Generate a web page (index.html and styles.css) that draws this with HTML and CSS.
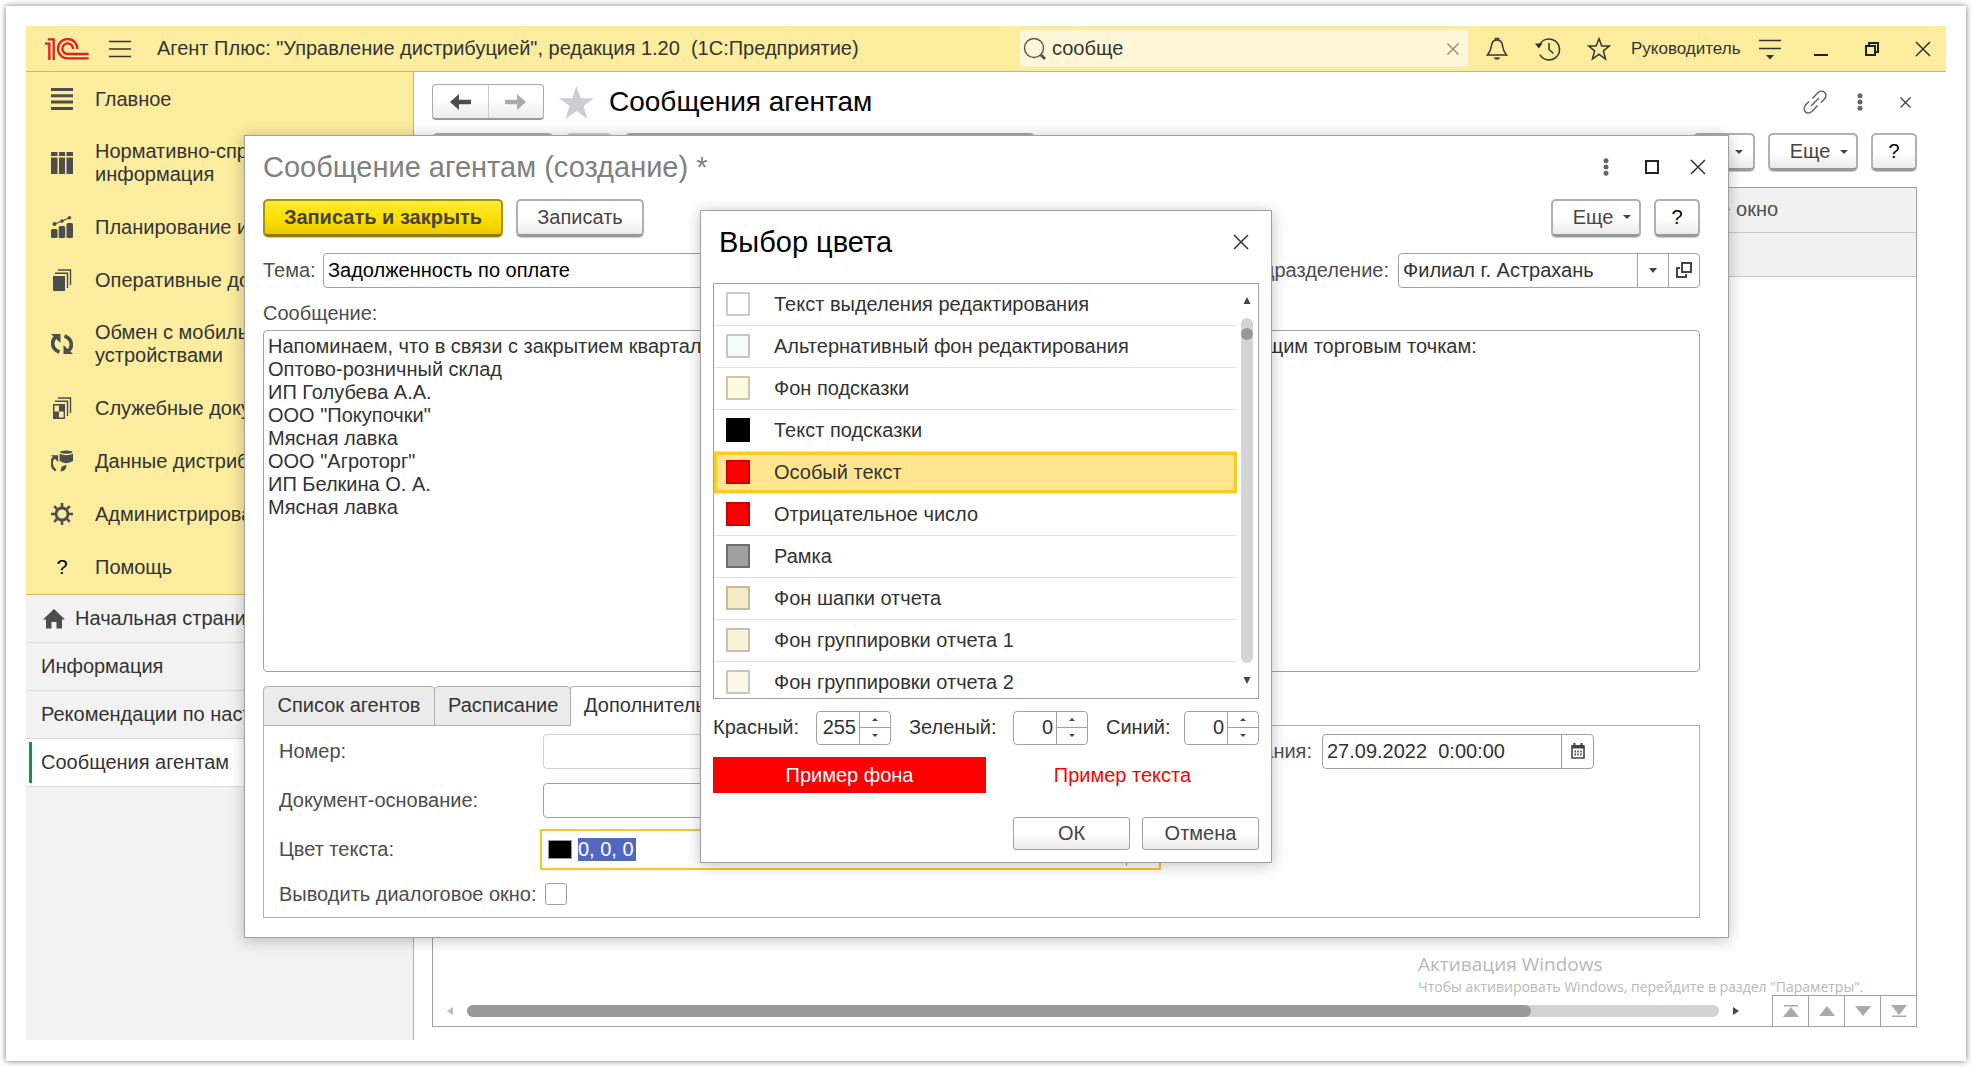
FILE: index.html
```html
<!DOCTYPE html>
<html lang="ru">
<head>
<meta charset="utf-8">
<title>Агент Плюс: Управление дистрибуцией</title>
<link rel="stylesheet" href="styles.css">
</head>
<body>
<div class="sheet">
<div class="app">

<header class="titlebar">
  <svg class="logo" width="44" height="22" viewBox="0 0 132 66" fill="none" stroke="#e31e24" stroke-width="7"><path d="M0 17H13V66M9 4H26V66M97 33A29 29 0 1 0 68 61H131M84 33A16 16 0 1 0 68 48H131"/></svg>
  <button class="icon-btn burger" aria-label="Меню"><svg width="22" height="18" viewBox="0 0 22 18" stroke="#333" stroke-width="1.4"><path d="M0 1.5H22M0 9H22M0 16.5H22"/></svg></button>
  <span class="app-title">Агент Плюс: "Управление дистрибуцией", редакция 1.20&nbsp; (1С:Предприятие)</span>
  <div class="search">
    <svg width="24" height="24" viewBox="0 0 24 24" fill="none" stroke="#555"><circle cx="11" cy="11" r="9.5" stroke-width="1.4"/><path d="M17.500 17.500L22 22" stroke-width="3"/></svg>
    <input type="text" value="сообще" aria-label="Поиск">
    <button class="icon-btn small" aria-label="Очистить"><svg width="12" height="12" viewBox="0 0 12 12" stroke="#8f8b77" stroke-width="1.4"><path d="M.5 .5L11.500 11.500M11.500 .5L.5 11.500"/></svg></button>
  </div>
  <button class="icon-btn" aria-label="Уведомления"><svg width="22" height="24" viewBox="0 0 22 24" fill="none" stroke="#333" stroke-width="1.500"><path d="M1.500 18C4.500 14.500 5 13 5.500 8.500C6 4.500 8 3 11 3S16 4.500 16.500 8.500C17 13 17.500 14.500 20.500 18Z"/><path d="M9.500 3V1.500H12.500V3"/><path d="M7.500 20.500H14.500L12.500 22.500H9.500Z" fill="#333" stroke="none"/></svg></button>
  <button class="icon-btn" aria-label="История"><svg width="26" height="24" viewBox="0 0 26 24" fill="none" stroke="#333" stroke-width="1.500"><path d="M4.300 8.500A10.500 10.500 0 1 1 4.800 17.500"/><path d="M14 6V12.500L18.500 16.500"/><path d="M0 6.500H7.500L3.800 11.500Z" fill="#333" stroke="none"/></svg></button>
  <button class="icon-btn" aria-label="Избранное"><svg width="24" height="24" viewBox="0 0 24 24" fill="none" stroke="#333" stroke-width="1.500"><path d="M12 1.800L14.800 9H22.300L16.400 13.800L18.500 22L12 17.300L5.500 22L7.600 13.800L1.700 9H9.200Z"/></svg></button>
  <button class="user">Руководитель</button>
  <button class="icon-btn" aria-label="Настройки"><svg width="22" height="22" viewBox="0 0 22 22" stroke="#333" stroke-width="1.600"><path d="M0 2.500H22M0 10.500H22"/><path d="M7 17H15L11 21.500Z" fill="#333" stroke="none"/></svg></button>
  <button class="icon-btn" aria-label="Свернуть"><svg width="14" height="14" viewBox="0 0 14 14"><path d="M0 12H14V14H0Z" fill="#222"/></svg></button>
  <button class="icon-btn" aria-label="Восстановить"><svg width="14" height="14" viewBox="0 0 14 14" fill="none" stroke="#222" stroke-width="2"><path d="M1 4H10V13H1ZM4 4V1H13V10H10"/></svg></button>
  <button class="icon-btn" aria-label="Закрыть"><svg width="16" height="16" viewBox="0 0 16 16" stroke="#333" stroke-width="1.500"><path d="M1 1L15 15M15 1L1 15"/></svg></button>
</header>

<div class="workspace">
  <aside class="side">
    <nav class="sections">
      <a href="#"><svg width="22" height="22" viewBox="0 0 22 22" fill="#4d4d4d"><path d="M0 0H22V3H0ZM0 6.300H22V9.300H0ZM0 12.600H22V15.600H0ZM0 19H22V22H0Z"/></svg><span>Главное</span></a>
      <a href="#"><svg width="22" height="22" viewBox="0 0 22 22" fill="#4d4d4d"><path d="M0 0H6.500V4H0ZM8 0H14V4H8ZM15.500 0H22V4H15.500ZM0 5.500H6.500V22H0ZM8 5.500H14V22H8ZM15.500 5.500H22V22H15.500Z"/></svg><span>Нормативно-справочная<br>информация</span></a>
      <a href="#"><svg width="22" height="22" viewBox="0 0 22 22" fill="#4d4d4d"><rect y="13" width="6.500" height="9" rx="1.500"/><rect x="7.700" y="10" width="6.500" height="12" rx="1.500"/><rect x="15.500" y="7" width="6.500" height="15" rx="1.500"/><circle cx="3.500" cy="8" r="2"/><circle cx="11" cy="5" r="1.800"/><circle cx="18.500" cy="1.800" r="1.800"/><path d="M3.500 8L11 5L18.500 1.800" stroke="#4d4d4d" stroke-width="1.200" fill="none"/></svg><span>Планирование и анализ</span></a>
      <a href="#"><svg width="22" height="22" viewBox="0 0 22 22" fill="none" stroke="#4d4d4d" stroke-width="1.400"><path d="M2 7H14V22H2Z" fill="#4d4d4d" stroke="none"/><path d="M4 4.300H16.500V19M7 1H19.500V16"/></svg><span>Оперативные документы</span></a>
      <a href="#"><svg width="22" height="22" viewBox="0 0 22 22" fill="none" stroke="#4d4d4d" stroke-width="3.600"><path d="M8.500 19C0 16 0 7 5.500 3.500M13.500 3C22 6 22 15 16.500 18.500"/><path d="M0 1H9.500V10ZM22 21H12.500V12Z" fill="#4d4d4d" stroke="none"/></svg><span>Обмен с мобильными<br>устройствами</span></a>
      <a href="#"><svg width="22" height="22" viewBox="0 0 22 22" fill="none" stroke="#4d4d4d" stroke-width="1.400"><path d="M2.700 7.700H13.300V21.300H2.700Z"/><path d="M8 7.500H13V14.500H8ZM3 14.500H8V21.500H3Z" fill="#4d4d4d" stroke="none"/><path d="M4 4.300H16.500V19M7 1H19.500V16"/></svg><span>Служебные документы</span></a>
      <a href="#"><svg width="22" height="22" viewBox="1 0 23 22" fill="none" stroke="#4d4d4d" stroke-width="2.600"><path d="M6 21C0 17 1 9 5 6.500"/><path d="M1 5H8.500V12Z" fill="#4d4d4d" stroke="none"/><path d="M11 22L12 17L17 15C17.500 19 15 22 11 22Z" fill="#4d4d4d" stroke="none"/><ellipse cx="17" cy="1.700" rx="6.500" ry="1.700" fill="#4d4d4d" stroke="none"/><path d="M10 3.500Q17 6.500 24 3.500V11Q17 15.500 10 11Z" fill="#4d4d4d" stroke="none"/></svg><span>Данные дистрибуции</span></a>
      <a href="#"><svg width="22" height="22" viewBox="0 0 22 22" fill="none" stroke="#4d4d4d"><circle cx="11" cy="11" r="6" stroke-width="2.800"/><path d="M11 0V4M11 18V22M0 11H4M18 11H22M3.200 3.200L6 6M16 16L18.800 18.800M3.200 18.800L6 16M16 6L18.800 3.200" stroke-width="2.600"/></svg><span>Администрирование</span></a>
      <a href="#"><b class="qmark">?</b><span>Помощь</span></a>
    </nav>
    <nav class="windows">
      <a href="#" class="home"><svg width="22" height="20" viewBox="0 0 22 20" fill="#4d4d4d"><path d="M11 0L22 10.500H19V19.500H13.500V13H8.500V19.500H3V10.500H0Z"/></svg>Начальная страница</a>
      <a href="#">Информация</a>
      <a href="#">Рекомендации по настройке</a>
      <a href="#" class="current">Сообщения агентам</a>
    </nav>
  </aside>

  <main class="page">
    <div class="page-head">
      <div class="nav-pair">
        <button aria-label="Назад"><svg width="21" height="16" viewBox="0 0 21 16"><path d="M0 8L9 0V5.800H21V10.200H9V16Z" fill="#4d4d4d"/></svg></button>
        <button aria-label="Вперед"><svg width="21" height="16" viewBox="0 0 21 16"><path d="M21 8L12 0V5.800H0V10.200H12V16Z" fill="#aaa"/></svg></button>
      </div>
      <svg class="star" width="35" height="33" viewBox="0 0 35 33" fill="#ccced0"><path d="M17.500 0L21.800 12.200H35L24.500 20L28.500 33L17.500 25L6.500 33L10.500 20L0 12.200H13.200Z"/></svg>
      <h1>Сообщения агентам</h1>
      <div class="head-tools">
        <button class="icon-btn" aria-label="Ссылка"><svg width="24" height="24" viewBox="0 0 24 24" fill="none" stroke="#666" stroke-width="1.600"><path d="M8 16L16 8"/><path d="M9.500 8.500L14.500 3C17 .5 20 .8 21.700 2.500S23.500 7 21 9.500L18 12.500M6 11.500L3 14.500C.5 17 .8 20 2.300 21.700S7 23.500 9.500 21L14.500 15.500"/></svg></button>
        <button class="icon-btn" aria-label="Еще"><svg width="6" height="18" viewBox="0 0 6 18" fill="#666"><circle cx="3" cy="2.700" r="2.500"/><circle cx="3" cy="9" r="2.500"/><circle cx="3" cy="15.300" r="2.500"/></svg></button>
        <button class="icon-btn" aria-label="Закрыть"><svg width="11" height="11" viewBox="0 0 11 11" stroke="#444" stroke-width="1.400"><path d="M.5 .5L10.500 10.500M10.500 .5L.5 10.500"/></svg></button>
      </div>
    </div>
    <div class="toolbar">
      <button class="btn create" aria-label="Создать"></button>
      <button class="btn copy" disabled aria-label="Скопировать"></button>
      <input class="list-search" type="text" aria-label="Поиск по списку">
      <button class="btn drop" aria-label="Печать"><i class="caret"></i></button>
      <button class="btn more">Еще<i class="caret"></i></button>
      <button class="btn help">?</button>
    </div>
    <div class="grid-box">
      <table>
        <thead><tr><th></th><th class="last">Диалоговое окно</th></tr></thead>
        <tbody><tr><td></td><td></td></tr></tbody>
      </table>
      <div class="watermark"><p class="wm-title">Активация Windows</p><p>Чтобы активировать Windows, перейдите в раздел "Параметры".</p></div>
      <div class="grid-foot">
        <div class="hscroll">
          <svg width="6" height="8" viewBox="0 0 6 8"><path d="M6 0V8L0 4Z" fill="#bbb"/></svg>
          <div class="track"><div class="thumb"></div></div>
          <svg width="6" height="8" viewBox="0 0 6 8"><path d="M0 0V8L6 4Z" fill="#444"/></svg>
        </div>
        <div class="pager">
          <button aria-label="В начало"><svg width="16" height="12" viewBox="0 0 16 12" fill="#aaa"><path d="M1 0H15V1.500H1ZM8 2L16 12H0Z"/></svg></button>
          <button aria-label="Вверх"><svg width="16" height="10" viewBox="0 0 16 10" fill="#aaa"><path d="M8 0L16 10H0Z"/></svg></button>
          <button aria-label="Вниз"><svg width="16" height="10" viewBox="0 0 16 10" fill="#aaa"><path d="M8 10L16 0H0Z"/></svg></button>
          <button aria-label="В конец"><svg width="16" height="12" viewBox="0 0 16 12" fill="#aaa"><path d="M1 12H15V10.500H1ZM8 10L16 0H0Z"/></svg></button>
        </div>
      </div>
    </div>
  </main>
</div>

<div class="layer">
<section class="dialog message" role="dialog" aria-labelledby="msg-title">
  <div class="dialog-head">
    <h2 id="msg-title">Сообщение агентам (создание) *</h2>
    <button class="icon-btn" aria-label="Меню"><svg width="6" height="18" viewBox="0 0 6 18" fill="#666"><circle cx="3" cy="2.700" r="2.500"/><circle cx="3" cy="9" r="2.500"/><circle cx="3" cy="15.300" r="2.500"/></svg></button>
    <button class="icon-btn" aria-label="Развернуть"><svg width="14" height="14" viewBox="0 0 14 14" fill="none" stroke="#222" stroke-width="2"><path d="M1 1H13V13H1Z"/></svg></button>
    <button class="icon-btn" aria-label="Закрыть"><svg width="16" height="16" viewBox="0 0 16 16" stroke="#333" stroke-width="1.500"><path d="M1 1L15 15M15 1L1 15"/></svg></button>
  </div>
  <div class="toolbar">
    <button class="btn primary">Записать и закрыть</button>
    <button class="btn save">Записать</button>
    <button class="btn more push">Еще<i class="caret"></i></button>
    <button class="btn help">?</button>
  </div>
  <div class="topic-row">
    <label for="topic" class="topic-label">Тема:</label>
    <input id="topic" class="field topic" type="text" value="Задолженность по оплате">
    <label for="dept">Подразделение:</label>
    <div class="field combo dept">
      <select id="dept"><option>Филиал г. Астрахань</option></select>
      <button aria-label="Выбрать"><i class="caret tall"></i></button>
      <button aria-label="Открыть"><svg width="16" height="16" viewBox="0 0 16 16" fill="none" stroke="#444" stroke-width="2"><path d="M6 1H15V10H6Z"/><path d="M4 6H1V15H10V12"/></svg></button>
    </div>
  </div>
  <label class="msg-label" for="msg">Сообщение:</label>
  <textarea id="msg" class="field" wrap="off">Напоминаем, что в связи с закрытием квартального плана необходимо погасить задолженность по следующим торговым точкам:
Оптово-розничный склад
ИП Голубева А.А.
ООО "Покупочки"
Мясная лавка
ООО "Агроторг"
ИП Белкина О. А.
Мясная лавка</textarea>
  <div class="tabs" role="tablist">
    <button role="tab" class="tab-wide">Список агентов</button>
    <button role="tab" class="tab-mid">Расписание</button>
    <button role="tab" class="active" aria-selected="true">Дополнительно</button>
  </div>
  <div class="panel">
    <div class="form-row">
      <label for="num">Номер:</label>
      <input id="num" class="field num" type="text" disabled>
      <label for="until" class="until">Дата окончания:</label>
      <div class="field combo date">
        <input id="until" type="text" value="27.09.2022  0:00:00">
        <button aria-label="Календарь"><svg width="14" height="16" viewBox="0 0 14 16" fill="none" stroke="#444"><path d="M1 3H13V15H1Z" stroke-width="1.600"/><path d="M1 2H13V5.500H1Z" fill="#444" stroke="none"/><path d="M3.500 0V3M10.500 0V3" stroke-width="2"/><path d="M3.500 8.500H5M6.300 8.500H7.800M9.200 8.500H10.700M3.500 11.500H5M6.300 11.500H7.800M9.200 11.500H10.700" stroke-width="1.800"/></svg></button>
      </div>
    </div>
    <div class="form-row">
      <label for="base">Документ-основание:</label>
      <input id="base" class="field wide" type="text">
    </div>
    <div class="form-row">
      <label for="color">Цвет текста:</label>
      <div class="field combo wide focused">
        <span class="chip"></span>
        <input id="color" type="text" value="0, 0, 0">
        <button aria-label="Выбрать"><i class="caret tall"></i></button>
      </div>
    </div>
    <div class="form-row check-row">
      <label for="dlg">Выводить диалоговое окно:</label>
      <input id="dlg" type="checkbox">
    </div>
  </div>
</section>
</div>

<div class="layer top-layer">
<section class="dialog picker" role="dialog" aria-labelledby="pick-title">
  <div class="dialog-head">
    <h2 id="pick-title">Выбор цвета</h2>
    <button class="icon-btn" aria-label="Закрыть"><svg width="16" height="16" viewBox="0 0 16 16" stroke="#333" stroke-width="1.500"><path d="M1 1L15 15M15 1L1 15"/></svg></button>
  </div>
  <div class="color-box">
    <ul class="colors">
      <li><i class="sw white"></i>Текст выделения редактирования</li>
      <li><i class="sw mint"></i>Альтернативный фон редактирования</li>
      <li><i class="sw cream"></i>Фон подсказки</li>
      <li><i class="sw black"></i>Текст подсказки</li>
      <li class="selected"><i class="sw red"></i>Особый текст</li>
      <li><i class="sw red"></i>Отрицательное число</li>
      <li><i class="sw gray"></i>Рамка</li>
      <li><i class="sw sand"></i>Фон шапки отчета</li>
      <li><i class="sw sand-light"></i>Фон группировки отчета 1</li>
      <li><i class="sw ivory"></i>Фон группировки отчета 2</li>
    </ul>
    <div class="vscroll">
      <svg width="8" height="7" viewBox="0 0 8 7"><path d="M4 0L7.500 7H.5Z" fill="#444"/></svg>
      <div class="vtrack"><div class="vthumb"></div></div>
      <svg width="8" height="7" viewBox="0 0 8 7"><path d="M4 7L7.500 0H.5Z" fill="#444"/></svg>
    </div>
  </div>
  <div class="rgb">
    <label for="r">Красный:</label>
    <div class="spin"><input id="r" type="number" value="255"><span><button aria-label="Больше"><i class="up"></i></button><button aria-label="Меньше"><i class="down"></i></button></span></div>
    <label for="g">Зеленый:</label>
    <div class="spin"><input id="g" type="number" value="0"><span><button aria-label="Больше"><i class="up"></i></button><button aria-label="Меньше"><i class="down"></i></button></span></div>
    <label for="b">Синий:</label>
    <div class="spin"><input id="b" type="number" value="0"><span><button aria-label="Больше"><i class="up"></i></button><button aria-label="Меньше"><i class="down"></i></button></span></div>
  </div>
  <div class="samples"><div class="sample-bg">Пример фона</div><div class="sample-text">Пример текста</div></div>
  <div class="actions"><button class="flat">ОК</button><button class="flat">Отмена</button></div>
</section>
</div>

</div>
</div>
</body>
</html>
```
FILE: styles.css
```css
* { box-sizing: border-box; }

body {
  margin: 0;
  padding: 6px;
  background: #fff;
  color: #333;
  font: 20px/23px "Liberation Sans", Arial, sans-serif;
}

button, input, select, textarea {
  margin: 0;
  padding: 0;
  border: 0;
  background: none;
  color: inherit;
  font: inherit;
  outline: 0;
  border-radius: 0;
}

svg { display: block; flex: none; }
h1, h2, p, ul { margin: 0; padding: 0; }
h1, h2 { font-size: 28px; line-height: 34px; font-weight: 400; white-space: nowrap; }
h2 { font-size: 29px; }
a { color: inherit; text-decoration: none; }

.sheet {
  display: flex;
  min-height: calc(100vh - 12px);
  padding: 20px 20px 21px;
  background: #fff;
  box-shadow: 0 0 6px rgba(0, 0, 0, .55);
}

.app {
  position: relative;
  flex: 1;
  min-width: 0;
  display: flex;
  flex-direction: column;
}

/* Title bar */
.titlebar {
  display: flex;
  align-items: center;
  gap: 7px;
  height: 46px;
  padding: 0 1px 0 19px;
  background: #fbec9e;
  border-bottom: 1px solid #cdbb62;
}
.icon-btn {
  display: flex;
  align-items: center;
  justify-content: center;
  flex: none;
  width: 44px;
  height: 36px;
}
.icon-btn.small { width: 30px; }
.burger { margin-left: 2px; }
.app-title { flex: 1; margin-left: 8px; white-space: nowrap; }
.search {
  display: flex;
  align-items: center;
  width: 448px;
  height: 37px;
  padding: 0 0 0 3px;
  border-radius: 3px;
  background: #fef6d6;
}
.search input { flex: 1; min-width: 0; margin-left: 5px; }
.user { width: 113px; padding-left: 3px; font-size: 17px; text-align: left; }

.workspace { flex: 1; display: flex; }

/* Left column */
.side {
  flex: none;
  width: 388px;
  background: #f2f2f2;
  border-right: 1px solid #c0b36c;
}
.sections { padding-bottom: 1px; background: #fbec9e; border-bottom: 1px solid #cdbb62; }
.sections a {
  display: flex;
  align-items: center;
  min-height: 53px;
  padding: 15px 0 14px 25px;
  white-space: nowrap;
}
.sections svg, .qmark { width: 22px; }
.sections span { margin-left: 22px; }
.qmark { color: #000; font-weight: 400; text-align: center; }
.windows a {
  display: flex;
  align-items: center;
  height: 48px;
  padding-left: 15px;
  border-bottom: 1px solid #d9d9d9;
  white-space: nowrap;
}
.windows .home { gap: 10px; padding-left: 17px; }
.windows .current { background: linear-gradient(#009a4e, #009a4e) 3px center / 3px 41px no-repeat #fff; }

/* List page */
.page {
  flex: 1;
  min-width: 0;
  display: flex;
  flex-direction: column;
  padding: 12px 29px 13px 18px;
  background: #fff;
}
.page-head { display: flex; align-items: center; height: 36px; margin-bottom: 13px; }
.nav-pair {
  display: flex;
  width: 112px;
  height: 36px;
  border: 1px solid #aaa;
  border-bottom: 2px solid #999;
  border-radius: 4px;
  background: linear-gradient(#fff 40%, #ececec);
}
.nav-pair button { flex: 1; display: flex; align-items: center; justify-content: center; }
.nav-pair button + button { border-left: 1px solid #ccc; }
.star { margin: 0 15px; }
h1 { color: #000; }
.head-tools { display: flex; gap: 1px; margin-left: auto; margin-right: -10px; }

.toolbar { display: flex; gap: 13px; height: 38px; }
.btn {
  display: flex;
  align-items: center;
  justify-content: center;
  height: 38px;
  border: 2px solid #b0b0b0;
  border-bottom: 3px solid #999;
  border-radius: 5px;
  background: linear-gradient(#fff 50%, #ebebeb);
  color: #444;
  box-shadow: 0 1px 0 #ccc;
}
.create { width: 121px; }
.copy { width: 46px; border-color: #ccc; }
.list-search { width: 410px; border: 2px solid #aaa; border-radius: 5px; }
.drop { width: 62px; margin-left: auto; padding-left: 30px; }
.more { width: 90px; gap: 10px; padding-left: 12px; }
.help { width: 46px; color: #000; }
.primary {
  width: 240px;
  border-color: #ab9306;
  border-bottom-color: #8f7b05;
  background: linear-gradient(#ffe93b, #ffe000 50%, #e9cb00);
  font-weight: 700;
}
.save { width: 128px; }
.push { margin-left: auto; }
.caret {
  width: 0;
  border: 4px solid transparent;
  border-top-color: #444;
  border-bottom: 0;
}
.caret.tall { border-top-width: 5px; }

.grid-box {
  position: relative;
  flex: 1;
  display: flex;
  flex-direction: column;
  justify-content: space-between;
  margin-top: 16px;
  border: 1px solid #a0a0a0;
}
table { width: 100%; border-collapse: collapse; table-layout: fixed; }
th, td { height: 44px; padding: 0 8px; background: #f1f1f1; border-bottom: 1px solid #c8c8c8; }
th { color: #4d4d4d; font-weight: 400; text-align: left; }
th.last { width: 303px; }
.watermark {
  position: absolute;
  right: 44px;
  bottom: 28px;
  width: 454px;
  color: #b8b8b8;
  font: 14px/22px "Open Sans", "Noto Sans", sans-serif;
  white-space: nowrap;
}
.wm-title { font-size: 19px; line-height: 24px; }
.grid-foot { display: flex; align-items: flex-end; justify-content: space-between; }
.hscroll { flex: 1; display: flex; align-items: center; gap: 14px; height: 31px; padding: 0 33px 0 14px; }
.track { flex: 1; height: 12px; border-radius: 6px; background: #d4d4d4; }
.thumb { width: 85%; height: 12px; border-radius: 6px; background: #999; }
.pager { display: flex; height: 31px; border-top: 1px solid #a0a0a0; }
.pager button {
  display: flex;
  align-items: center;
  justify-content: center;
  width: 36px;
  border-left: 1px solid #a0a0a0;
}

/* Dialogs */
.layer {
  position: absolute;
  inset: 0;
  z-index: 1;
  display: flex;
  align-items: center;
  justify-content: center;
  padding-top: 6px;
}
.top-layer { z-index: 2; }
.dialog {
  background: #fff;
  border: 1px solid #a0a0a0;
  box-shadow: 0 2px 14px rgba(0, 0, 0, .25);
}
.dialog-head { display: flex; align-items: center; gap: 2px; }
.dialog-head h2 { flex: 1; }

.message { flex: 1; margin: 0 217px 0 218px; padding: 0 28px 19px 18px; }
.message .dialog-head { height: 62px; margin: 0 -20px 1px 0; }
.message h2 { color: #808080; }
.message label { color: #4d4d4d; white-space: nowrap; }

.field {
  height: 35px;
  padding: 0 4px;
  border: 1px solid #a0a0a0;
  border-radius: 4px;
  background: #fff;
}
.combo { display: flex; align-items: center; padding-right: 0; }
.combo input, .combo select { flex: 1; min-width: 0; appearance: none; }
.combo button {
  display: flex;
  align-items: center;
  justify-content: center;
  width: 31px;
  height: 33px;
  border-left: 1px solid #a0a0a0;
}
.topic-row { display: flex; align-items: center; gap: 9px; margin-top: 16px; }
.topic-label { width: 51px; }
.topic { flex: 1; color: #000; }
.dept { width: 302px; }
.msg-label { display: block; margin: 14px 0 5px; }
textarea.field {
  display: block;
  width: 100%;
  height: 342px;
  padding: 4px;
  resize: none;
  overflow: hidden;
}

.tabs { position: relative; z-index: 1; display: flex; margin-top: 14px; }
.tabs button {
  height: 40px;
  margin-right: -1px;
  padding: 0 13px;
  border: 1px solid #b0b0b0;
  border-radius: 4px 4px 0 0;
  background: #ebebeb;
  white-space: nowrap;
}
.tabs .tab-wide { width: 172px; }
.tabs .tab-mid { width: 137px; }
.tabs .active { border-bottom-color: #fff; background: #fff; }
.panel {
  display: flex;
  flex-direction: column;
  gap: 14px;
  margin-top: -1px;
  padding: 8px 105px 11px 15px;
  border: 1px solid #b0b0b0;
}
.form-row { display: flex; align-items: center; }
.form-row > label:first-child { width: 264px; }
.num { width: 500px; }
.num:disabled { border-color: #d0d0d0; }
.until { margin-left: auto; margin-right: 10px; }
.date { width: 272px; }
.date button { width: 32px; }
.wide { width: 615px; }
.focused { border-color: transparent; border-radius: 0; outline: 2px solid #fac51f; outline-offset: 1px; }
.chip { width: 24px; height: 19px; background: #000; border: 1px solid #999; }
.focused input { flex: none; width: 58px; margin-left: 6px; background: #5167c0; color: #fff; }
.focused button { margin-left: auto; }
.check-row { margin-top: 2px; }
.check-row input {
  appearance: none;
  width: 22px;
  height: 22px;
  margin-left: 2px;
  border: 1px solid #a0a0a0;
  border-radius: 3px;
}

.picker { width: 572px; padding: 0 12px 12px; }
.picker .dialog-head { height: 62px; margin: 0 -4px 10px 6px; }
.picker h2 { color: #000; }
.color-box { display: flex; height: 416px; border: 1px solid #a0a0a0; overflow: hidden; }
.colors { flex: 1; list-style: none; }
.colors li {
  display: flex;
  align-items: center;
  gap: 24px;
  height: 42px;
  padding-left: 12px;
  border-bottom: 1px solid #e3e3e3;
}
.colors .selected {
  background: #fee58e;
  box-shadow: inset 0 0 0 3px #fbcb20;
}
.sw { width: 24px; height: 24px; border: 2px solid rgba(0, 0, 0, .2); }
.white { background: #fff; }
.mint { background: #f4fbf8; }
.cream { background: #fffadb; }
.black { background: #000; }
.red { background: #f00; }
.gray { background: #a0a0a0; border-color: #6e6e6e; }
.sand { background: #f3ebc4; }
.sand-light { background: #f8f2d8; }
.ivory { background: #fbf9ec; }
.vscroll {
  display: flex;
  flex-direction: column;
  align-items: center;
  width: 12px;
  margin: 0 5px 0 4px;
  padding: 13px 0 14px;
}
.vtrack { flex: 1; width: 12px; margin: 14px 0; padding-top: 10px; border-radius: 6px; background: #d4d4d4; }
.vthumb { height: 12px; border-radius: 6px; background: #999; }

.rgb {
  display: grid;
  grid-template-columns: 85px 75px 86px 75px 60px 75px;
  column-gap: 18px;
  align-items: center;
  margin: 12px 0;
}
.spin {
  display: flex;
  height: 34px;
  border: 1px solid #a0a0a0;
  border-radius: 4px;
}
.spin input { flex: 1; min-width: 0; padding-right: 3px; text-align: right; appearance: textfield; }
.spin input::-webkit-inner-spin-button { display: none; }
.spin span { display: flex; flex-direction: column; width: 31px; border-left: 1px solid #a0a0a0; }
.spin button { flex: 1; display: flex; align-items: center; justify-content: center; }
.spin button + button { border-top: 1px solid #a0a0a0; }
.up, .down { border: 3px solid transparent; }
.up { border-bottom-color: #444; border-top: 0; }
.down { border-top-color: #444; border-bottom: 0; }

.samples { display: flex; height: 36px; line-height: 36px; text-align: center; }
.samples div { flex: 1; }
.sample-bg { background: #f00; color: #fff; }
.sample-text { color: #f00; }
.actions { display: flex; justify-content: flex-end; gap: 12px; margin-top: 24px; }
.flat {
  width: 117px;
  height: 33px;
  border: 1px solid #a0a0a0;
  border-radius: 3px;
  background: linear-gradient(#fff 40%, #ececec);
  color: #444;
}
```
